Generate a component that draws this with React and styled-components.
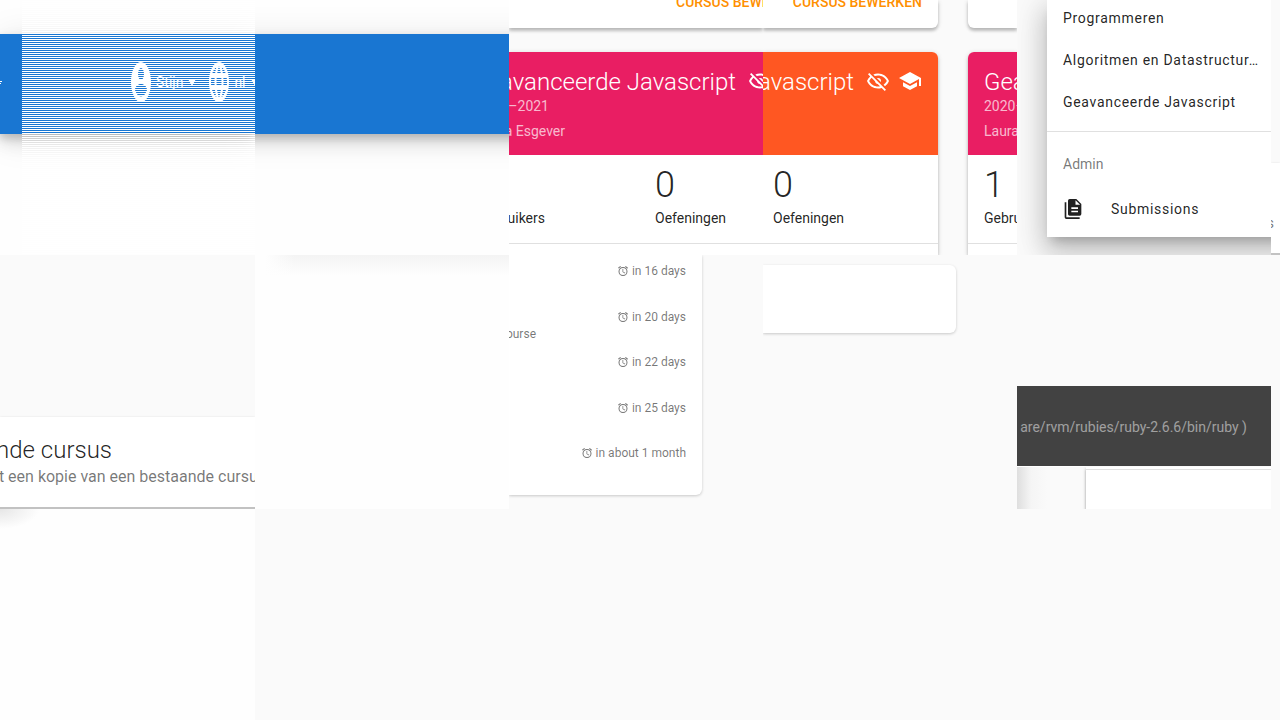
import React from "react";
import styled, { createGlobalStyle } from "styled-components";

const GlobalStyle = createGlobalStyle`
  *, *::before, *::after { box-sizing: border-box; }
  body {
    margin: 0;
    background: #fafafa;
    color: rgba(0, 0, 0, 0.87);
    font-family: Roboto, "Liberation Sans", sans-serif;
    font-size: 14px;
    line-height: 20px;
  }
  h2, p, ul, dl, dd { margin: 0; padding: 0; }
  a { color: inherit; text-decoration: none; }
  button { border: 0; padding: 0; background: none; font: inherit; color: inherit; cursor: pointer; }
  svg { display: block; flex: none; fill: currentColor; }
`;

const paths = {
  account:
    "M12,19.2C9.5,19.2 7.29,17.92 6,16C6.03,14 10,12.9 12,12.9C14,12.9 17.97,14 18,16C16.71,17.92 14.5,19.2 12,19.2M12,5A3,3 0 0,1 15,8A3,3 0 0,1 12,11A3,3 0 0,1 9,8A3,3 0 0,1 12,5M12,2A10,10 0 0,0 2,12A10,10 0 0,0 12,22A10,10 0 0,0 22,12C22,6.47 17.5,2 12,2Z",
  web: "M16.36,14C16.44,13.34 16.5,12.68 16.5,12C16.5,11.32 16.44,10.66 16.36,10H19.74C19.9,10.64 20,11.31 20,12C20,12.69 19.9,13.36 19.74,14M14.59,19.56C15.19,18.45 15.65,17.25 15.97,16H18.92C17.96,17.65 16.43,18.93 14.59,19.56M14.34,14H9.66C9.56,13.34 9.5,12.68 9.5,12C9.5,11.32 9.56,10.65 9.66,10H14.34C14.43,10.65 14.5,11.32 14.5,12C14.5,12.68 14.43,13.34 14.34,14M12,19.96C11.17,18.76 10.5,17.43 10.09,16H13.91C13.5,17.43 12.83,18.76 12,19.96M8,8H5.08C6.03,6.34 7.57,5.06 9.4,4.44C8.8,5.55 8.35,6.75 8,8M5.08,16H8C8.35,17.25 8.8,18.45 9.4,19.56C7.57,18.93 6.03,17.65 5.08,16M4.26,14C4.1,13.36 4,12.69 4,12C4,11.31 4.1,10.64 4.26,10H7.64C7.56,10.66 7.5,11.32 7.5,12C7.5,12.68 7.56,13.34 7.64,14M12,4.03C12.83,5.23 13.5,6.57 13.91,8H10.09C10.5,6.57 11.17,5.23 12,4.03M18.92,8H15.97C15.65,6.75 15.19,5.55 14.59,4.44C16.43,5.07 17.96,6.34 18.92,8M12,2C6.47,2 2,6.5 2,12A10,10 0 0,0 12,22A10,10 0 0,0 22,12A10,10 0 0,0 12,2Z",
  eyeOff:
    "M2,5.27L3.28,4L20,20.72L18.73,22L15.65,18.92C14.5,19.3 13.28,19.5 12,19.5C7,19.5 2.73,16.39 1,12C1.69,10.24 2.79,8.69 4.19,7.46L2,5.27M12,9A3,3 0 0,1 15,12C15,12.35 14.94,12.69 14.83,13L11,9.17C11.31,9.06 11.65,9 12,9M12,4.5C17,4.5 21.27,7.61 23,12C22.18,14.08 20.79,15.88 19,17.19L17.58,15.76C18.94,14.82 20.06,13.54 20.82,12C19.17,8.64 15.76,6.5 12,6.5C10.91,6.5 9.84,6.68 8.84,7L7.3,5.47C8.74,4.85 10.33,4.5 12,4.5M3.18,12C4.83,15.36 8.24,17.5 12,17.5C12.69,17.5 13.37,17.43 14,17.29L11.72,15C10.29,14.85 9.15,13.71 9,12.28L5.6,8.87C4.61,9.72 3.78,10.78 3.18,12Z",
  school: "M12,3L1,9L12,15L21,10.09V17H23V9M5,13.18V17.18L12,21L19,17.18V13.18L12,17L5,13.18Z",
  alarm:
    "M12,20A7,7 0 0,1 5,13A7,7 0 0,1 12,6A7,7 0 0,1 19,13A7,7 0 0,1 12,20M12,4A9,9 0 0,0 3,13A9,9 0 0,0 12,22A9,9 0 0,0 21,13A9,9 0 0,0 12,4M12.5,8H11V14L15.75,16.85L16.5,15.62L12.5,13.25V8M7.88,3.39L6.6,1.86L2,5.71L3.29,7.24L7.88,3.39M22,5.72L17.4,1.86L16.11,3.39L20.71,7.25L22,5.72Z",
  files:
    "M15,7H20.5L15,1.5V7M8,0H16L22,6V18A2,2 0 0,1 20,20H8C6.89,20 6,19.1 6,18V2A2,2 0 0,1 8,0M4,4V22H20V24H4A2,2 0 0,1 2,22V4H4M10,10V12H18V10H10M10,14V16H18V14H10Z",
};

const Icon = ({ name, size = 24 }) => (
  <svg width={size} height={size} viewBox="0 0 24 24" fillRule="evenodd" aria-hidden="true">
    <path d={paths[name]} />
  </svg>
);

const TallIcon = ({ name }) => (
  <svg width="20" height="40" viewBox="2 2 20 20" preserveAspectRatio="none" fillRule="evenodd" aria-hidden="true">
    <path d={paths[name]} />
  </svg>
);

const Caret = () => (
  <svg width="8" height="8" viewBox="0 0 8 8" aria-hidden="true">
    <path d="M0 1H8L4 8Z" />
  </svg>
);

const Board = styled.main`
  display: grid;
  grid-template-columns: 255fr 254fr 254fr 254fr 254fr 9fr;
  grid-template-rows: 255px 254px 1fr;
  min-height: 100vh;
`;

const Tile = styled.section`
  position: relative;
  display: flex;
  flex-direction: column;
  min-width: 0;
  overflow: hidden;
  white-space: nowrap;
  background: ${(p) => (p.$white ? "#fefefe" : "#fafafa")};
`;

const StripedTile = styled(Tile)`
  &::after {
    content: "";
    position: absolute;
    inset: 0 0 0 22px;
    background: repeating-linear-gradient(transparent 0 1px, #fff 1px 2px);
    pointer-events: none;
  }
`;

const AppBar = styled.header`
  display: flex;
  align-items: center;
  justify-content: space-between;
  height: 100px;
  margin: 34px ${(p) => (p.$bleed ? "-40px" : 0)} 0;
  padding-bottom: 4px;
  background: #1976d2;
  color: #fff;
  box-shadow: 0 4px 8px rgba(0, 0, 0, 0.16), 0 8px 16px rgba(0, 0, 0, 0.12),
    0 4px 36px rgba(0, 0, 0, 0.1);
`;

const BarMenus = styled.nav`
  display: flex;
  gap: 13px;
  width: 124px;
`;

const BarButton = styled.button`
  display: flex;
  flex: none;
  align-items: center;
  gap: 5px;
`;

/* Box of a given width whose text runs out past its left side. */
const EndAligned = styled.span`
  display: flex;
  flex: none;
  justify-content: flex-end;
  width: ${(p) => p.$width};
`;

const CardTop = styled.div`
  display: flex;
  flex: none;
  align-items: flex-end;
  justify-content: ${(p) => (p.$end ? "flex-end" : "flex-start")};
  height: 28px;
  padding: 0 16px 16px ${(p) => p.$inset || 0};
  background: #fff;
  border-radius: ${(p) => p.$radius || 0};
  box-shadow: 0 3px 3px rgba(0, 0, 0, 0.18), 0 1px 5px rgba(0, 0, 0, 0.16);
`;

const EditButton = styled.button`
  flex: none;
  color: #ff8f00;
  font-weight: 500;
`;

const Columns = styled.div`
  display: grid;
  grid-template-columns: 175fr 49fr;
  gap: 30px;
  height: 100%;
`;

const Column = styled.div`
  display: flex;
  flex-direction: column;
  gap: 24px;
  min-width: 0;
  height: 100%;
`;

const Course = styled.article`
  flex: 1;
  overflow: hidden;
  background: #fff;
  border-radius: ${(p) => p.$radius || 0};
`;

const CourseFrame = styled.div`
  display: flex;
  flex: 1;
  border-radius: ${(p) => p.$radius || 0};
  box-shadow: 0 3px 3px rgba(0, 0, 0, 0.18), 0 1px 5px rgba(0, 0, 0, 0.16);
`;

const CourseHead = styled.div`
  height: 103px;
  padding: 14px 16px 0 ${(p) => p.$inset || 0};
  background: ${(p) => p.$color};
  color: rgba(255, 255, 255, 0.7);
`;

const TitleRow = styled.div`
  display: flex;
  align-items: center;
  justify-content: ${(p) => (p.$end ? "flex-end" : "flex-start")};
  gap: 8px;
  color: #fff;

  svg { margin-bottom: 2px; }
`;

const Title = styled.h2`
  margin-right: 4px;
  font-size: 24px;
  font-weight: 300;
  line-height: 32px;
`;

const Meta = styled.p`
  margin-bottom: 9px;
  line-height: 16px;
`;

const Stats = styled.dl`
  display: grid;
  grid-template-columns: ${(p) => p.$columns || "1fr"};
  height: 89px;
  padding: 8px 0 0 ${(p) => p.$inset || 0};
  border-bottom: 1px solid #e0e0e0;
`;

const Stat = styled.div`
  display: flex;
  flex-direction: column-reverse;
  justify-content: flex-end;
`;

const StatLabel = styled.dt`
  line-height: 22px;
`;

const StatValue = styled.dd`
  height: 44px;
  font-size: 36px;
  font-weight: 300;
  line-height: 44px;
`;

const Menu = styled.nav`
  flex: none;
  height: 237px;
  margin-left: 30px;
  margin-right: -30px;
  background: #fff;
  box-shadow: 0 8px 10px -5px rgba(0, 0, 0, 0.2), 0 16px 24px 2px rgba(0, 0, 0, 0.14),
    0 6px 30px 5px rgba(0, 0, 0, 0.12);
`;

const MenuLinks = styled.div`
  display: flex;
  flex-direction: column;
  justify-content: flex-end;
  height: 132px;
  padding-bottom: 8px;
  border-bottom: 1px solid #e0e0e0;
`;

const MenuLink = styled.a`
  display: flex;
  flex: none;
  align-items: center;
  gap: 28px;
  height: 42px;
  padding: 0 14px 0 16px;
  letter-spacing: 0.05em;
`;

const MenuHeading = styled.p`
  padding: 22px 16px 14px;
  color: rgba(0, 0, 0, 0.54);
`;

const Option = styled.article`
  height: 92px;
  margin-top: ${(p) => p.$top};
  padding-top: 17px;
  background: #fff;
  border-bottom: 2px solid #c2c2c2;
  box-shadow: 0 0 2px rgba(0, 0, 0, 0.1);
`;

const OptionText = styled.p`
  color: rgba(0, 0, 0, 0.54);
  font-size: 16px;
  line-height: 22px;
`;

const EdgeText = styled.p`
  padding-top: 33px;
  color: rgba(0, 0, 0, 0.54);
`;

const ShadowStrip = styled.div`
  height: 20px;
  width: ${(p) => p.$width || "auto"};
  background: ${(p) =>
    p.$corner
      ? "radial-gradient(ellipse at top left, #e6e6e6, #fefefe 70%)"
      : "linear-gradient(90deg, #fefefe 10px, transparent 40px), linear-gradient(#f4f4f4, #fefefe)"};
`;

const Deadlines = styled.ul`
  display: flex;
  flex-direction: column;
  height: 240px;
  margin-right: 61px;
  padding: 8px 16px 4px 0;
  list-style: none;
  background: #fff;
  border-radius: 0 0 6px 0;
  box-shadow: 0 1px 3px rgba(0, 0, 0, 0.2);
  color: rgba(0, 0, 0, 0.54);
  font-size: 12px;
  line-height: 16px;
`;

const Deadline = styled.li`
  display: flex;
  flex: 1;
  justify-content: space-between;
`;

const CourseName = styled(EndAligned)`
  padding-top: 17px;
`;

const Due = styled.span`
  display: flex;
  align-items: center;
  gap: 3px;
  height: 16px;
`;

const EmptyCard = styled.div`
  height: 68px;
  margin: 10px 61px 0 0;
  background: #fff;
  border-radius: 0 6px 6px 0;
  box-shadow: 0 1px 3px rgba(0, 0, 0, 0.2);
`;

const Footer = styled.footer`
  display: flex;
  align-items: center;
  justify-content: flex-end;
  height: 80px;
  margin-top: 131px;
  padding: 2px 24px 0 0;
  background: #424242;
  color: rgba(255, 255, 255, 0.5);
`;

const Below = styled.div`
  display: flex;
  flex: 1;
  padding-left: 69px;
  border-top: 1px solid #fff;
  background: linear-gradient(90deg, #dedede, #f5f5f5 14px, #fafafa 30px);
`;

const Sheet = styled.div`
  flex: 1;
  background: #fff;
  box-shadow: 0 2px 3px rgba(0, 0, 0, 0.4);

  &::before {
    content: "";
    display: block;
    margin-top: 2px;
    border-top: 1px solid #e0e0e0;
  }
`;

const StatItem = ({ label, value }) => (
  <Stat>
    <StatLabel>{label}</StatLabel>
    <StatValue>{value}</StatValue>
  </Stat>
);

const deadlines = [
  { due: "in 16 days" },
  { due: "in 20 days", course: "ourse" },
  { due: "in 22 days" },
  { due: "in 25 days" },
  { due: "in about 1 month" },
];

export default function App() {
  return (
    <>
      <GlobalStyle />
      <Board>
        <StripedTile $white>
          <AppBar>
            <svg width="2" height="3" viewBox="0 0 2 3" aria-hidden="true">
              <path d="M0 0H2V1H0ZM0 2H1V3H0Z" />
            </svg>
            <BarMenus>
              <BarButton>
                <TallIcon name="account" />
                Stijn
                <Caret />
              </BarButton>
              <BarButton>
                <TallIcon name="web" />
                nl
                <Caret />
              </BarButton>
            </BarMenus>
          </AppBar>
        </StripedTile>

        <Tile $white>
          <AppBar $bleed />
        </Tile>

        <Tile>
          <Column>
            <CardTop $inset="167px">
              <EditButton>CURSUS BEWERKEN</EditButton>
            </CardTop>
            <CourseFrame>
              <Course>
                <CourseHead $color="#e91e63">
                  <TitleRow>
                    <EndAligned $width="231px">
                      <Title>avanceerde Javascript</Title>
                    </EndAligned>
                    <Icon name="eyeOff" />
                  </TitleRow>
                  <Meta>
                    <EndAligned $width="40px">–2021</EndAligned>
                  </Meta>
                  <Meta>
                    <EndAligned $width="56px">a Esgever</EndAligned>
                  </Meta>
                </CourseHead>
                <Stats $columns="146px 1fr">
                  <StatItem label={<EndAligned $width="36px">uikers</EndAligned>} value="" />
                  <StatItem label="Oefeningen" value="0" />
                </Stats>
              </Course>
            </CourseFrame>
          </Column>
        </Tile>

        <Tile>
          <Columns>
            <Column>
              <CardTop $end $radius="0 0 6px 0">
                <EditButton>CURSUS BEWERKEN</EditButton>
              </CardTop>
              <CourseFrame $radius="0 6px 0 0">
                <Course $radius="0 6px 0 0">
                  <CourseHead $color="#ff5722">
                    <TitleRow $end>
                      <Title>avascript</Title>
                      <Icon name="eyeOff" />
                      <Icon name="school" />
                    </TitleRow>
                  </CourseHead>
                  <Stats $inset="10px">
                    <StatItem label="Oefeningen" value="0" />
                  </Stats>
                </Course>
              </CourseFrame>
            </Column>
            <Column>
              <CardTop $radius="0 0 0 6px" />
              <CourseFrame $radius="6px 0 0 0">
                <Course $radius="6px 0 0 0">
                  <CourseHead $color="#e91e63" $inset="16px">
                    <TitleRow>
                      <Title>Geavanceerde</Title>
                    </TitleRow>
                    <Meta>2020–2021</Meta>
                    <Meta>Laura</Meta>
                  </CourseHead>
                  <Stats $inset="16px">
                    <StatItem label="Gebruikers" value="1" />
                  </Stats>
                </Course>
              </CourseFrame>
            </Column>
          </Columns>
        </Tile>

        <Tile>
          <Menu>
            <MenuLinks>
              <MenuLink href="#programmeren">Programmeren</MenuLink>
              <MenuLink href="#algoritmen">Algoritmen en Datastructur…</MenuLink>
              <MenuLink href="#javascript">Geavanceerde Javascript</MenuLink>
            </MenuLinks>
            <MenuHeading>Admin</MenuHeading>
            <MenuLink href="#submissions">
              <Icon name="files" size={20} />
              Submissions
            </MenuLink>
          </Menu>
        </Tile>

        <Tile>
          <Option $top="163px">
            <EdgeText>
              <EndAligned $width="3px">s</EndAligned>
            </EdgeText>
          </Option>
        </Tile>

        <Tile>
          <Option $top="162px">
            <EndAligned $width="116px">
              <Title>nde cursus</Title>
            </EndAligned>
            <OptionText>
              <EndAligned $width="266px">et een kopie van een bestaande cursus</EndAligned>
            </OptionText>
          </Option>
        </Tile>

        <Tile $white>
          <ShadowStrip />
        </Tile>

        <Tile>
          <Deadlines>
            {deadlines.map(({ due, course }) => (
              <Deadline key={due}>
                <CourseName $width="27px">{course}</CourseName>
                <Due>
                  <Icon name="alarm" size={12} />
                  {due}
                </Due>
              </Deadline>
            ))}
          </Deadlines>
        </Tile>

        <Tile>
          <EmptyCard />
        </Tile>

        <Tile>
          <Footer>are/rvm/rubies/ruby-2.6.6/bin/ruby )</Footer>
          <Below>
            <Sheet />
          </Below>
        </Tile>

        <Tile />

        <Tile $white>
          <ShadowStrip $corner $width="40px" />
        </Tile>
      </Board>
    </>
  );
}
